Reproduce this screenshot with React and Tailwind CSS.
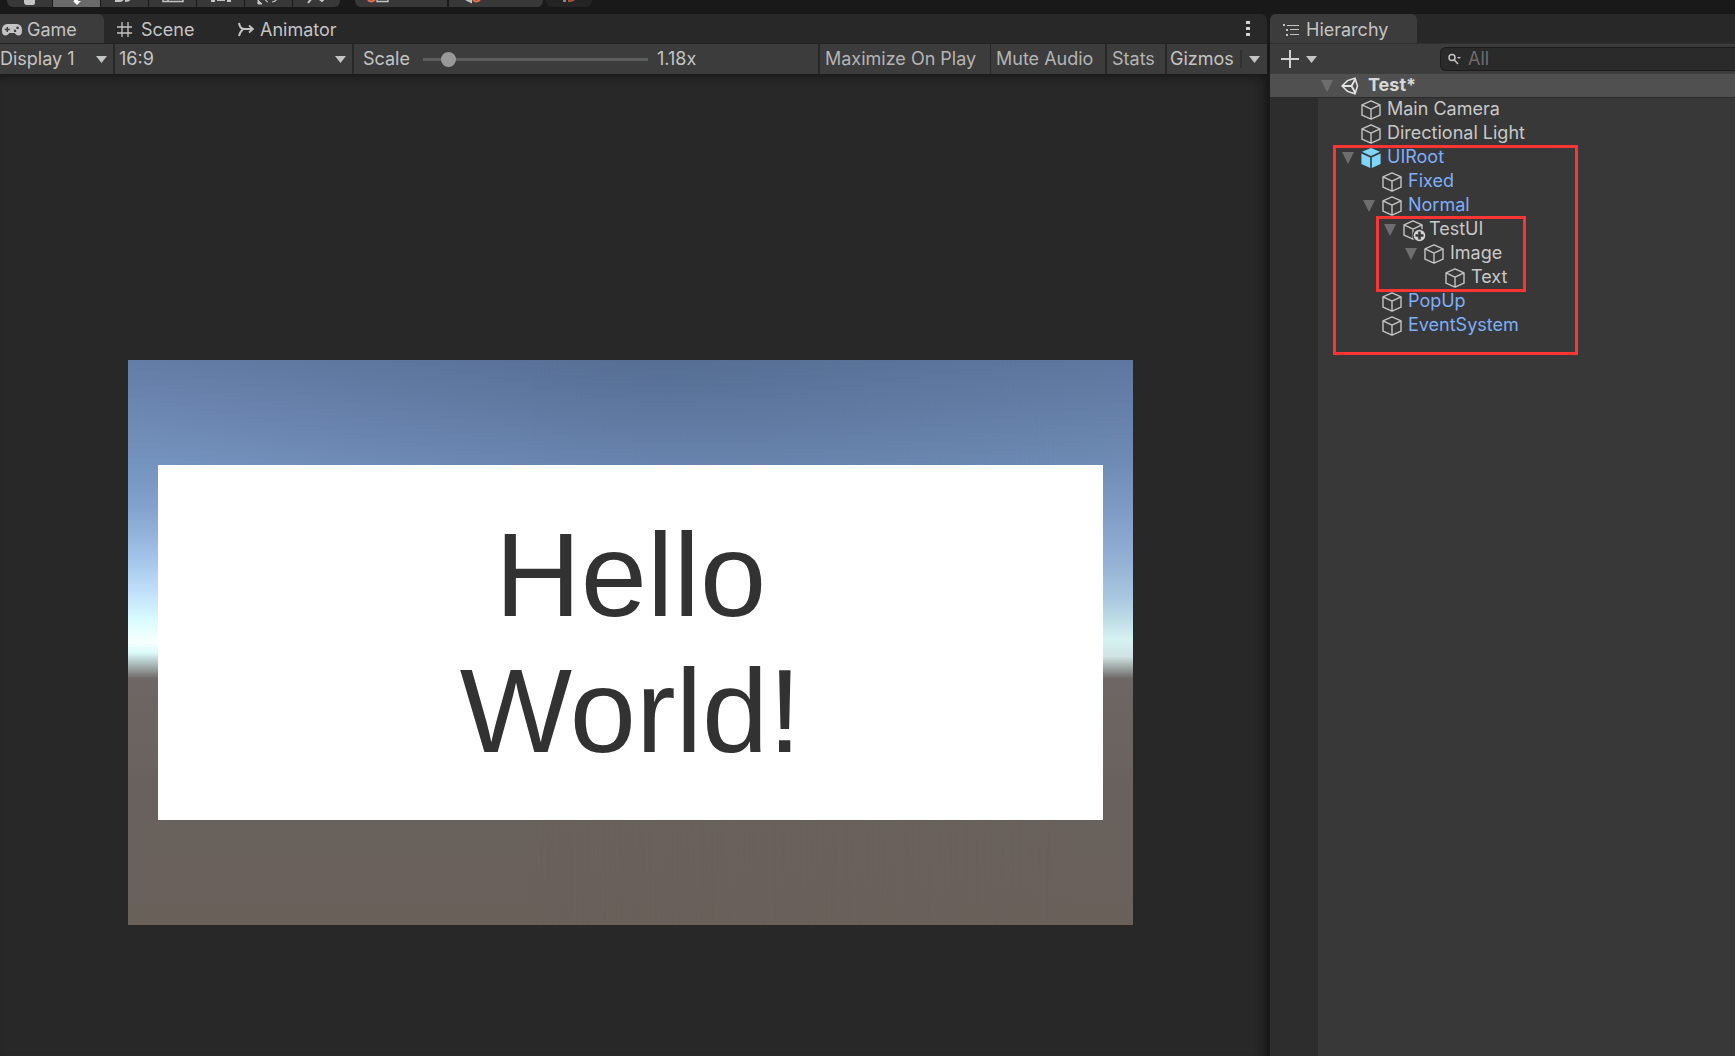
import { useState } from 'react'

const tools = [
  { name: 'Hand', width: 'w-[45px]', icon: <path d="M3 0h11v3q0 2-2 2H6Q3 5 3 2z" fill="currentColor" /> },
  { name: 'Move', active: true, icon: <path d="M6 -1h4v2h3l-4 4-4-4h1z" fill="currentColor" /> },
  { name: 'Rotate', icon: <path d="M-1 1h5q2 0 3-2M9 1q4 0 5-2M-1 1h6" fill="none" stroke="currentColor" strokeWidth="2" /> },
  { name: 'Scale', icon: <path d="M-1 -2v3.500h20v-3.500M4 -2v3.500" fill="none" stroke="currentColor" strokeWidth="1.500" /> },
  { name: 'Rect', icon: <path d="M-1 -1h4v3h-4zM15 -1h4v3h-4zM5 0h8v1H5z" fill="currentColor" /> },
  { name: 'Transform', icon: <path d="M-2 0v4h4zM5 -1q1 3 3 3M12 2q4 0 5-3" fill="currentColor" stroke="currentColor" strokeWidth="1" /> },
  { name: 'Custom', icon: <path d="M0 3 4-2M10 -2l4 3 3-3" fill="none" stroke="currentColor" strokeWidth="2" /> },
]

const nodes = [
  { name: 'Main Camera', depth: 1 },
  { name: 'Directional Light', depth: 1 },
  { name: 'UIRoot', depth: 1, open: true, prefab: true, root: true },
  { name: 'Fixed', depth: 2, prefab: true },
  { name: 'Normal', depth: 2, open: true, prefab: true },
  { name: 'TestUI', depth: 3, open: true, added: true },
  { name: 'Image', depth: 4, open: true },
  { name: 'Text', depth: 5 },
  { name: 'PopUp', depth: 2, prefab: true },
  { name: 'EventSystem', depth: 2, prefab: true },
]

function Caret({ className = '' }) {
  return (
    <svg viewBox="0 0 11 7" className={`w-[11px] h-[7px] shrink-0 fill-[#c4c4c4] ${className}`}>
      <path d="M0 0h11L5.500 7z" />
    </svg>
  )
}

function Foldout({ open }) {
  return (
    <svg viewBox="0 0 12 12" className="w-3 h-3 shrink-0 fill-[#6e6e6e]">
      {open && <path d="M0 0h12L6 12z" />}
    </svg>
  )
}

function Cube({ solid, added }) {
  if (solid) {
    return (
      <svg viewBox="0 0 20 20" className="w-5 h-5 shrink-0 fill-[#7fd6fd]">
        <path d="M10 0 19 3.8 10 8 1 3.8z" />
        <path d="M.4 5.4 9.2 9.4V20L.4 16z" />
        <path d="M19.6 5.4 10.8 9.4V20l8.8-4z" />
      </svg>
    )
  }
  return (
    <svg viewBox="0 0 20 20" className="w-5 h-5 shrink-0 overflow-visible" fill="none">
      <path
        d="M10 .8 19 4.8V15.2L10 19.2 1 15.2V4.8zM1 4.8l9 4.4 9-4.4M10 9.2v10"
        stroke="#c4c4c4"
        strokeWidth="1.4"
        strokeLinejoin="round"
      />
      {added && (
        <>
          <circle cx="16.5" cy="15.5" r="7" fill="#383838" />
          <circle cx="16.5" cy="15.5" r="5.8" fill="#d2d2d2" />
          <path d="M16.5 11.5v8M12.5 15.5h8" stroke="#383838" strokeWidth="2.6" />
        </>
      )}
    </svg>
  )
}

function UnityLogo() {
  return (
    <svg viewBox="0 0 18 18" className="w-[18px] h-[18px] shrink-0" fill="none" stroke="#e4e4e4" strokeWidth="1.8">
      <path d="M1 9 6.5 3.6 14 1.2 16.5 9 14 16.8 6.5 14.4z" strokeWidth="1.5" />
      <path d="M1 9h9.5M10.5 9 14.5 1.8M10.5 9l4 7.2" />
    </svg>
  )
}

function MainToolbar() {
  return (
    <div className="flex h-[7px] pl-[7px] mb-[7px] overflow-hidden text-[#c4c4c4]">
      <div className="flex gap-px rounded-b-md overflow-hidden">
        {tools.map((tool) => (
          <button
            key={tool.name}
            aria-label={tool.name}
            className={`flex justify-center h-[7px] ${tool.width || 'w-[47px]'} ${tool.active ? 'bg-[#6a6a6a] text-white' : 'bg-[#383838]'}`}
          >
            <svg viewBox="0 0 18 7" className="w-[18px] h-[7px] overflow-visible">
              {tool.icon}
            </svg>
          </button>
        ))}
      </div>
      <div className="flex gap-[2px] ml-[15px] rounded-b-md overflow-hidden">
        <button aria-label="Pivot" className="w-[92px] h-[7px] pl-3 bg-[#383838]">
          <svg viewBox="0 0 22 7" className="w-[22px] h-[7px]" fill="none" strokeWidth="2">
            <path d="M10 -1v2.500h11V-1" stroke="#c4c4c4" strokeWidth="1.4" />
            <path d="M1 0q3 3 7 0" stroke="#e8714a" />
          </svg>
        </button>
        <button aria-label="Local" className="w-[94px] h-[7px] pl-4 bg-[#383838]">
          <svg viewBox="0 0 22 7" className="w-[22px] h-[7px]" fill="none" strokeWidth="2">
            <path d="M0 -1l6 3V-1" stroke="#c4c4c4" />
            <path d="M8 0q3 3 7 0" stroke="#e8714a" />
          </svg>
        </button>
      </div>
      <button aria-label="Snap" className="flex justify-center w-[46px] h-[7px] ml-[3px] rounded-b-md bg-[#242424]">
        <svg viewBox="0 0 14 7" className="w-[14px] h-[7px]">
          <path d="M1 0h3v2H1z" fill="#8a8a8a" />
          <path d="M6 0h7q-2 2-7 2z" fill="#a0523a" />
        </svg>
      </button>
    </div>
  )
}

function GameTabs() {
  return (
    <div role="tablist" className="flex items-stretch h-[29px] bg-[#282828] rounded-tr-md">
      <button role="tab" aria-selected="true" className="flex items-center gap-[5px] w-[104px] pt-[2px] pl-[2px] bg-[#3c3c3c] rounded-tr-md">
        <svg viewBox="0 0 20 12" className="w-5 h-3 fill-[#c4c4c4]">
          <path
            fillRule="evenodd"
            d="M5.500 0h9Q20 0 20 6.500q0 5-3.500 5Q14.500 11.500 12.500 9h-5Q5.500 11.500 3.500 11.500 0 11.500 0 6.500 0 0 5.500 0zM4.600 3v1.800H2.800v1.400h1.800V8H6V6.200h1.800V4.800H6V3zM15.500 2.500a1.300 1.300 0 1 0 .1 0zM13 5.500a1.300 1.300 0 1 0 .1 0z"
          />
        </svg>
        Game
      </button>
      <button role="tab" className="flex items-center gap-2 w-[121px] pt-[2px] pl-[13px]">
        <svg viewBox="0 0 16 16" className="w-4 h-4" stroke="#c4c4c4" strokeWidth="1.3">
          <path d="M5 0v15M11 0v15M0 5h15M0 11h15" />
        </svg>
        Scene
      </button>
      <button role="tab" className="flex items-center gap-[6px] pt-[2px] pl-[13px]">
        <svg viewBox="0 0 16 16" className="w-4 h-4" fill="none" stroke="#c4c4c4" strokeWidth="2">
          <path d="M1 1q1 6 5 6h8M1 14q1-4 4-7" />
          <path d="M11 3.500l4 3.500-4 3.500" strokeWidth="1.800" />
        </svg>
        Animator
      </button>
      <button aria-label="Tab options" className="ml-auto mr-[17px] flex items-center">
        <svg viewBox="0 0 4 16" className="w-1 h-4 fill-[#d2d2d2]">
          <path d="M0 0h4v3H0zM0 6h4v3H0zM0 12h4v3H0z" />
        </svg>
      </button>
    </div>
  )
}

function Dropdown({ label, options, className }) {
  return (
    <div className={`relative flex items-center border-r-2 border-[#282828] ${className}`}>
      <select aria-label={label} className="appearance-none w-full h-full bg-transparent outline-none">
        {options.map((option) => (
          <option key={option}>{option}</option>
        ))}
      </select>
      <Caret className="absolute right-[6px] pointer-events-none" />
    </div>
  )
}

function GameToolbar() {
  const [scale, setScale] = useState(1.18)

  return (
    <div className="flex items-stretch h-[31px] bg-[#3c3c3c] border-t border-[#232323]">
      <Dropdown label="Display" options={['Display 1', 'Display 2']} className="w-[115px]" />
      <Dropdown label="Aspect" options={['16:9', '16:10', 'Free Aspect']} className="w-[239px] pl-1" />
      <div className="flex items-center flex-1 pl-[9px] border-r-2 border-[#282828]">
        <label htmlFor="scale" className="w-[60px]">Scale</label>
        <input
          id="scale"
          type="range"
          min="1"
          max="3.1"
          step="0.01"
          value={scale}
          onChange={(e) => setScale(Number(e.target.value))}
          className="appearance-none w-[225px] h-[3px] bg-[#5e5e5e] [&::-webkit-slider-thumb]:appearance-none [&::-webkit-slider-thumb]:size-[15px] [&::-webkit-slider-thumb]:rounded-full [&::-webkit-slider-thumb]:bg-[#999999]"
        />
        <output htmlFor="scale" className="pl-[9px]">{scale.toFixed(2)}x</output>
      </div>
      <button className="w-[171px] pl-[5px] text-left border-r border-[#282828] text-[#b4b4b4]">Maximize On Play</button>
      <button className="w-[116px] pl-[5px] text-left border-r-2 border-[#282828] text-[#b4b4b4]">Mute Audio</button>
      <button className="w-[60px] pl-[5px] text-left border-r-2 border-[#282828] text-[#b4b4b4]">Stats</button>
      <button className="w-[73px] pl-[3px] text-left">Gizmos</button>
      <button aria-label="Gizmo options" className="flex items-center my-[6px] px-[7px] border-l-2 border-[#303030]">
        <Caret />
      </button>
    </div>
  )
}

function GameView() {
  return (
    <div className="flex-1 pt-[286px] bg-[#282828] shadow-[inset_0_10px_10px_-7px_#181818,inset_-10px_0_10px_-7px_#181818]">
      <div className="relative flex ml-[128px] mr-[134px] aspect-video px-[30px] py-[105px] bg-[linear-gradient(#647da6_0%,#7593bf_18.6%,#83a1cd_26%,#a3c3e9_35%,#c5e5fd_42%,#d9fcff_46%,#f8ffff_50%,#d9fbfa_51.8%,#9aa3a2_54.6%,#6d6765_56.400%,#69625c_75%,#69605a_100%)]">
        <div className="absolute inset-0 bg-[linear-gradient(#6079a1_0%,#6f8db6_18.6%,#7c9ac4_26%,#92afd4_35%,#a9c6e0_42%,#bfdde6_46%,#d6f2f3_49.500%,#cfe3e3_52.500%,#9aa19f_54.600%,#6d6765_56.400%,#69625c_75%,#69605a_100%)] [mask-image:linear-gradient(to_right,transparent_40%,black_94%)]" />
        <div className="absolute inset-0 bg-[radial-gradient(ellipse_54%_42%_at_53%_0%,rgba(66,88,122,0.4),transparent)]" />
        <div className="relative flex flex-1 items-center justify-center bg-white">
          <p className="font-['Liberation_Sans',Arial,sans-serif] text-[119px] leading-[136px] text-center text-[#323232]">
            Hello
            <br />
            World!
          </p>
        </div>
      </div>
    </div>
  )
}

function HierarchyHeader() {
  return (
    <>
      <div role="tablist" className="flex h-[29px] bg-[#282828] rounded-tl-md">
        <button role="tab" aria-selected="true" className="flex items-center gap-[7px] w-[147px] pt-[2px] pl-[13px] bg-[#3c3c3c] rounded-t-md">
          <svg viewBox="0 0 16 12" className="w-4 h-3 fill-[#c4c4c4]">
            <path d="M0 0h2v2H0zM4 1h12v1H4zM3 5h2v2H3zM7 5h9v1H7zM3 10h2v2H3zM7 10h9v1H7z" />
          </svg>
          Hierarchy
        </button>
      </div>
      <div className="flex items-center h-[31px] pl-[11px] bg-[#3c3c3c] border-t border-[#303030]">
        <button aria-label="Create" className="flex items-center gap-[7px] w-[159px]">
          <svg viewBox="0 0 18 18" className="w-[18px] h-[18px]" stroke="#d2d2d2" strokeWidth="2">
            <path d="M9 0v18M0 9h18" />
          </svg>
          <Caret />
        </button>
        <div className="flex items-center flex-1 h-6 gap-[7px] pl-[7px] bg-[#2a2a2a] border border-r-0 border-[#1c1c1c] rounded-l-md">
          <svg viewBox="0 0 13 12" className="w-[13px] h-3 shrink-0" fill="none" stroke="#c4c4c4" strokeWidth="1.500">
            <circle cx="4" cy="4.500" r="3" />
            <path d="M6 6.500 10 11" />
            <path d="M9 4h4l-2 2z" fill="#c4c4c4" stroke="none" />
          </svg>
          <input
            type="text"
            aria-label="Search"
            placeholder="All"
            className="w-full bg-transparent outline-none placeholder:text-[#6c6c6c]"
          />
        </div>
      </div>
    </>
  )
}

function HierarchyTree() {
  return (
    <div className="relative flex flex-col flex-1 bg-[#383838]">
      <div className="flex items-center h-6 pl-[51px] bg-[#505050] border-b border-[#2a2a2a] text-[#d8d8d8]">
        <Foldout open />
        <span className="flex items-center gap-[9px] pl-2 font-bold">
          <UnityLogo />
          <span className="pb-[2px]">Test*</span>
        </span>
      </div>
      <div className="flex flex-1">
        <div className="w-12 bg-[#2d2d2d]" />
        <ul role="tree" aria-label="Scene objects" className="flex-1">
          {nodes.map((node) => (
            <li
              key={node.name}
              role="treeitem"
              className={`flex items-center h-6 ${node.prefab ? 'text-[#7faef8]' : 'text-[#c8c8c8]'}`}
              style={{ paddingLeft: 3 + node.depth * 21 }}
            >
              <Foldout open={node.open} />
              <span className="flex items-center gap-[6px] pl-[7px] whitespace-nowrap">
                <Cube solid={node.root} added={node.added} />
                <span className="pb-[2px]">{node.name}</span>
              </span>
            </li>
          ))}
        </ul>
      </div>

      {/* Highlight frames */}
      <div className="absolute left-[63px] top-[71px] w-[245px] h-[210px] border-3 border-[#fb3434] pointer-events-none" />
      <div className="absolute left-[106px] top-[142px] w-[150px] h-[76px] border-3 border-[#fb3434] pointer-events-none" />
    </div>
  )
}

export default function App() {
  return (
    <div className="flex flex-col min-h-screen bg-[#191919] font-[Inter,sans-serif] text-[18px] leading-6 text-[#c4c4c4] overflow-hidden">
      <MainToolbar />
      <main className="flex flex-1 gap-[3px]">
        <section aria-label="Game" className="flex flex-col flex-1">
          <GameTabs />
          <GameToolbar />
          <GameView />
        </section>
        <aside aria-label="Hierarchy" className="flex flex-col w-[465px]">
          <HierarchyHeader />
          <HierarchyTree />
        </aside>
      </main>
    </div>
  )
}
